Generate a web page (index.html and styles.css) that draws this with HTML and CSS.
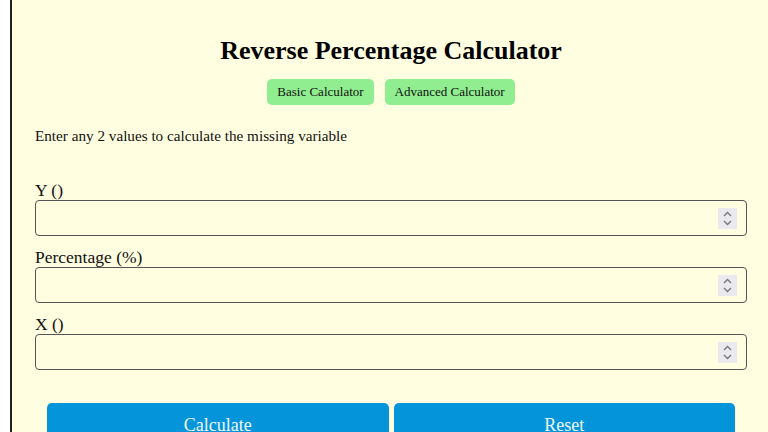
FILE: index.html
```html
<!DOCTYPE html>
<html lang="en">
<head>
<meta charset="utf-8">
<title>Reverse Percentage Calculator</title>
<link rel="stylesheet" href="styles.css">
</head>
<body>
<div class="container">
  <h1 class="title">Reverse Percentage Calculator</h1>
  <div class="nav">
    <button class="nav-btn">Basic Calculator</button>
    <button class="nav-btn">Advanced Calculator</button>
  </div>
  <p class="intro">Enter any 2 values to calculate the missing variable</p>
  <div class="form">
    <label class="label">Y ()</label>
    <div class="field">
      <input class="input" type="text">
      <span class="spin"><svg width="19" height="21" viewBox="0 0 19 21"><path d="M6 8 L9.5 4.5 L13 8" fill="none" stroke="#75757a" stroke-width="1.3"/><path d="M6 13 L9.5 16.5 L13 13" fill="none" stroke="#75757a" stroke-width="1.3"/></svg></span>
    </div>
    <label class="label">Percentage (%)</label>
    <div class="field">
      <input class="input" type="text">
      <span class="spin"><svg width="19" height="21" viewBox="0 0 19 21"><path d="M6 8 L9.5 4.5 L13 8" fill="none" stroke="#75757a" stroke-width="1.3"/><path d="M6 13 L9.5 16.5 L13 13" fill="none" stroke="#75757a" stroke-width="1.3"/></svg></span>
    </div>
    <label class="label">X ()</label>
    <div class="field">
      <input class="input" type="text">
      <span class="spin"><svg width="19" height="21" viewBox="0 0 19 21"><path d="M6 8 L9.5 4.5 L13 8" fill="none" stroke="#75757a" stroke-width="1.3"/><path d="M6 13 L9.5 16.5 L13 13" fill="none" stroke="#75757a" stroke-width="1.3"/></svg></span>
    </div>
  </div>
  <div class="actions">
    <button class="action">Calculate</button>
    <button class="action">Reset</button>
  </div>
</div>
</body>
</html>
```
FILE: styles.css
```css
html { overflow: hidden; }
body {
  margin: 0;
  background: #ffffff;
  font-family: "Liberation Serif", "Times New Roman", serif;
  color: #111;
}
.container {
  margin-left: 10px;
  width: 762px;
  box-sizing: border-box;
  min-height: 500px;
  background: #fffee0;
  border-left: 2px solid #222;
  border-right: 2px solid #222;
  padding: 36px 23px 20px;
}
.title {
  margin: 0;
  font-size: 26px;
  line-height: 30px;
  font-weight: bold;
  text-align: center;
  color: #000;
}
.nav {
  margin-top: 13px;
  display: flex;
  justify-content: center;
  gap: 11px;
}
.nav-btn {
  height: 26px;
  padding: 0 10px;
  border: none;
  border-radius: 5px;
  background: #90ee90;
  font-family: "Liberation Serif", "Times New Roman", serif;
  font-size: 13px;
  color: #111;
}
.intro {
  margin: 21px 0 0;
  font-size: 15.2px;
  line-height: 20px;
}
.form {
  margin-top: 35px;
  display: flex;
  flex-direction: column;
}
.label {
  display: block;
  font-size: 17.5px;
  line-height: 19px;
  height: 19px;
}
.field {
  position: relative;
  margin-bottom: 12px;
}
.input {
  display: block;
  width: 100%;
  height: 36px;
  box-sizing: border-box;
  border: 1px solid #555;
  border-radius: 4px;
  background: transparent;
  margin: 0;
}
.spin {
  position: absolute;
  right: 10px;
  top: 8px;
  width: 19px;
  height: 21px;
  background: #e9e9ee;
}
.spin svg { display: block; }
.actions {
  margin-top: 21px;
  padding: 0 12px;
  display: flex;
  gap: 5px;
}
.action {
  flex: 1;
  height: 44px;
  border: none;
  border-radius: 5px;
  background: #0494da;
  color: #f2f9fd;
  font-family: "Liberation Serif", "Times New Roman", serif;
  font-size: 18px;
}
```
